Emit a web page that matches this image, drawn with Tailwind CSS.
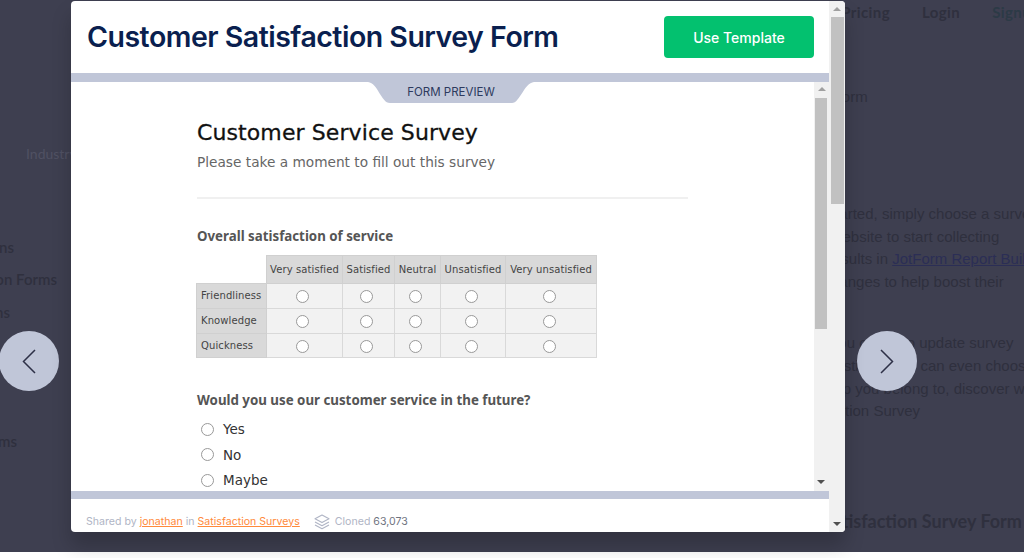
<!DOCTYPE html>
<html lang="en">
  <head>
    <meta charset="UTF-8" />
    <title>Customer Satisfaction Survey Form</title>
    <script src="https://cdn.jsdelivr.net/npm/@tailwindcss/browser@4"></script>
  </head>
  <body class="bg-white font-['Inter',sans-serif]">
    <div class="relative h-[558px] w-[1024px] overflow-hidden">
      <!-- Dimmed page behind the modal -->
      <div class="h-[552px] overflow-hidden bg-[#3e3f50] text-[#2f303e]">
        <!-- Nav -->
        <div class="flex h-[22px] items-end justify-start gap-[32px] pl-[845px] font-['Lato',sans-serif] text-[15px] leading-[20px] font-bold tracking-[0.4px]">
          <span class="flex w-[45px] justify-end">Pricing</span>
          <span>Login</span>
          <span class="text-[#2c3a46]">Signup</span>
        </div>
        <div class="flex">
          <!-- Left column -->
          <div class="w-[100px] font-['Lato',sans-serif] text-[15px] leading-[21px] font-semibold">
            <p class="mt-[121px] pl-[26px] text-[14px] font-normal whitespace-nowrap text-[#505163]">Industry</p>
            <div class="mt-[73px] flex w-[14px] justify-end whitespace-nowrap"><span>Registrations</span></div>
            <div class="mt-[11px] flex w-[57px] justify-end whitespace-nowrap"><span>Application Forms</span></div>
            <div class="mt-[12px] flex w-[10px] justify-end whitespace-nowrap"><span>Donations</span></div>
            <div class="mt-[108px] flex w-[17px] justify-end whitespace-nowrap"><span>Forms</span></div>
          </div>
          <!-- Right column -->
          <div class="ml-[706px] font-['Liberation_Sans',sans-serif] text-[15px] leading-[22.8px] whitespace-nowrap">
            <p class="mt-[64px] pl-[50px]">Form</p>
            <p class="mt-[94px]">To get started, simply choose a survey</p>
            <p class="ml-[-6px]">for your website to start collecting</p>
            <p class="pl-[12px]">your results in <span class="text-[#2b2e55] underline">JotForm Report Builder</span></p>
            <p>make changes to help boost their</p>
            <p class="mt-[38px] pl-[47px]">You can also update survey</p>
            <p class="pl-[36px]">questions, and can even choose</p>
            <p class="pl-[5px]">the group you belong to, discover what</p>
            <p class="pl-[9px]">Satisfaction Survey</p>
            <p class="mt-[87px] ml-[-42px] font-['Lato',sans-serif] text-[18px] font-bold">Customer Satisfaction Survey Form</p>
          </div>
        </div>
      </div>

      <!-- Previous / next -->
      <button class="absolute top-[331px] left-[-1px] flex h-[60px] w-[60px] items-center justify-center rounded-full bg-[#c0c6d8]">
        <svg width="14" height="25" viewBox="0 0 14 25" fill="none" stroke="#2d3047" stroke-width="1.5"><path d="M13 1 1.5 12.5 13 24" /></svg>
      </button>
      <button class="absolute top-[331px] left-[857px] flex h-[60px] w-[60px] items-center justify-center rounded-full bg-[#c0c6d8]">
        <svg width="14" height="25" viewBox="0 0 14 25" fill="none" stroke="#2d3047" stroke-width="1.5"><path d="M1 1 12.5 12.5 1 24" /></svg>
      </button>

      <!-- Modal -->
      <div class="absolute top-[1px] left-[71px] flex h-[531px] w-[774px] overflow-hidden rounded-[4px] bg-white shadow-[0_14px_20px_rgba(0,0,0,0.2)]">
        <div class="flex w-[758px] flex-col">
          <!-- Header -->
          <div class="flex h-[72px] shrink-0 items-center justify-between pr-[15px] pl-[16px]">
            <h1 class="font-['Inter',sans-serif] text-[28.5px] font-semibold tracking-[-0.5px] text-[#0a1f4f]">Customer Satisfaction Survey Form</h1>
            <button class="h-[42px] w-[150px] rounded-[4px] bg-[#03c16f] text-[14px] font-medium text-white">Use Template</button>
          </div>
          <div class="h-[9px] shrink-0 bg-[#c0c6d8]"></div>

          <!-- Form preview frame -->
          <div class="relative flex h-[409px] shrink-0">
            <div class="absolute top-0 left-[297px] flex h-[21px] w-[166px] justify-center">
              <svg class="absolute inset-0" width="166" height="21" viewBox="0 0 166 21" fill="#c0c6d8"><path d="M0 0H166C156 1 152 21 144 21H22C13 21 10 1 0 0Z" /></svg>
              <span class="relative text-[11.5px] leading-[20px] text-[#2d3a5e]">FORM PREVIEW</span>
            </div>
            <div class="w-[743px] overflow-hidden pt-[37px] pl-[126px] font-['DejaVu_Sans',sans-serif]">
              <h2 class="text-[22px] leading-[28px] font-medium tracking-[0.1px] text-[#111] [-webkit-text-stroke:0.3px_#111]">Customer Service Survey</h2>
              <p class="mt-[5px] text-[13.7px] leading-[20px] text-[#666]">Please take a moment to fill out this survey</p>
              <div class="mt-[25px] h-[2px] w-[491px] bg-[#f0f0f0]"></div>
              <h3 class="mt-[28px] font-['Noto_Sans',sans-serif] text-[13.3px] leading-[18px] font-bold text-[#555]">Overall satisfaction of service</h3>
              <table class="mt-[10px] ml-[-1px] table-fixed border-collapse text-[10px] tracking-[0.1px] text-[#444]">
                <thead>
                  <tr class="h-[28px] text-center">
                    <td class="w-[70px]"></td>
                    <td class="w-[76px] border border-[#d0d0d0] bg-[#d9d9d9]">Very satisfied</td>
                    <td class="w-[52px] border border-[#d0d0d0] bg-[#d9d9d9]">Satisfied</td>
                    <td class="w-[46px] border border-[#d0d0d0] bg-[#d9d9d9]">Neutral</td>
                    <td class="w-[65px] border border-[#d0d0d0] bg-[#d9d9d9]">Unsatisfied</td>
                    <td class="w-[91px] border border-[#d0d0d0] bg-[#d9d9d9]">Very unsatisfied</td>
                  </tr>
                </thead>
                <tbody>
                  <tr class="h-[25px]">
                    <td class="border border-[#d0d0d0] bg-[#d9d9d9] pb-[1px] pl-[4px]">Friendliness</td>
                    <td class="border border-[#d9d9d9] bg-[#f2f2f2] pt-[1px] pr-[4px]"><div class="mx-auto h-[13px] w-[13px] rounded-full border border-[#999] bg-white"></div></td>
                    <td class="border border-[#d9d9d9] bg-[#f2f2f2] pt-[1px] pr-[4px]"><div class="mx-auto h-[13px] w-[13px] rounded-full border border-[#999] bg-white"></div></td>
                    <td class="border border-[#d9d9d9] bg-[#f2f2f2] pt-[1px] pr-[4px]"><div class="mx-auto h-[13px] w-[13px] rounded-full border border-[#999] bg-white"></div></td>
                    <td class="border border-[#d9d9d9] bg-[#f2f2f2] pt-[1px] pr-[4px]"><div class="mx-auto h-[13px] w-[13px] rounded-full border border-[#999] bg-white"></div></td>
                    <td class="border border-[#d9d9d9] bg-[#f2f2f2] pt-[1px] pr-[4px]"><div class="mx-auto h-[13px] w-[13px] rounded-full border border-[#999] bg-white"></div></td>
                  </tr>
                  <tr class="h-[25px]">
                    <td class="border border-[#d0d0d0] bg-[#d9d9d9] pb-[1px] pl-[4px]">Knowledge</td>
                    <td class="border border-[#d9d9d9] bg-[#f2f2f2] pt-[1px] pr-[4px]"><div class="mx-auto h-[13px] w-[13px] rounded-full border border-[#999] bg-white"></div></td>
                    <td class="border border-[#d9d9d9] bg-[#f2f2f2] pt-[1px] pr-[4px]"><div class="mx-auto h-[13px] w-[13px] rounded-full border border-[#999] bg-white"></div></td>
                    <td class="border border-[#d9d9d9] bg-[#f2f2f2] pt-[1px] pr-[4px]"><div class="mx-auto h-[13px] w-[13px] rounded-full border border-[#999] bg-white"></div></td>
                    <td class="border border-[#d9d9d9] bg-[#f2f2f2] pt-[1px] pr-[4px]"><div class="mx-auto h-[13px] w-[13px] rounded-full border border-[#999] bg-white"></div></td>
                    <td class="border border-[#d9d9d9] bg-[#f2f2f2] pt-[1px] pr-[4px]"><div class="mx-auto h-[13px] w-[13px] rounded-full border border-[#999] bg-white"></div></td>
                  </tr>
                  <tr class="h-[24px]">
                    <td class="border border-[#d0d0d0] bg-[#d9d9d9] pb-[1px] pl-[4px]">Quickness</td>
                    <td class="border border-[#d9d9d9] bg-[#f2f2f2] pt-[1px] pr-[4px]"><div class="mx-auto h-[13px] w-[13px] rounded-full border border-[#999] bg-white"></div></td>
                    <td class="border border-[#d9d9d9] bg-[#f2f2f2] pt-[1px] pr-[4px]"><div class="mx-auto h-[13px] w-[13px] rounded-full border border-[#999] bg-white"></div></td>
                    <td class="border border-[#d9d9d9] bg-[#f2f2f2] pt-[1px] pr-[4px]"><div class="mx-auto h-[13px] w-[13px] rounded-full border border-[#999] bg-white"></div></td>
                    <td class="border border-[#d9d9d9] bg-[#f2f2f2] pt-[1px] pr-[4px]"><div class="mx-auto h-[13px] w-[13px] rounded-full border border-[#999] bg-white"></div></td>
                    <td class="border border-[#d9d9d9] bg-[#f2f2f2] pt-[1px] pr-[4px]"><div class="mx-auto h-[13px] w-[13px] rounded-full border border-[#999] bg-white"></div></td>
                  </tr>
                </tbody>
              </table>
              <h3 class="mt-[33px] font-['Noto_Sans',sans-serif] text-[13.3px] leading-[18px] font-bold text-[#555]">Would you use our customer service in the future?</h3>
              <div class="mt-[11px] flex flex-col gap-[7px] pl-[4px] text-[13.5px] leading-[18.5px] text-[#333]">
                <div class="flex items-center gap-[9px]"><div class="h-[13px] w-[13px] rounded-full border border-[#999]"></div>Yes</div>
                <div class="flex items-center gap-[9px]"><div class="h-[13px] w-[13px] rounded-full border border-[#999]"></div>No</div>
                <div class="flex items-center gap-[9px]"><div class="h-[13px] w-[13px] rounded-full border border-[#999]"></div>Maybe</div>
              </div>
            </div>
            <!-- Inner scrollbar -->
            <div class="relative w-[15px] bg-[#f1f1f1]">
              <div class="mx-auto mt-[5px] h-0 w-0 border-x-[4px] border-b-[4px] border-x-transparent border-b-[#a0a0a0]"></div>
              <div class="absolute top-[16px] left-[1px] h-[231px] w-[12px] bg-[#c1c1c1]"></div>
              <div class="absolute bottom-[7px] left-[3px] h-0 w-0 border-x-[4px] border-t-[4px] border-x-transparent border-t-[#505050]"></div>
            </div>
          </div>
          <div class="h-[8px] shrink-0 bg-[#c0c6d8]"></div>

          <!-- Footer -->
          <div class="flex flex-1 items-center gap-[14px] pt-[12px] pl-[15px] text-[10.6px] text-[#b0b5c5]">
            <p>Shared by <span class="text-[#ff8a3c] underline">jonathan</span> in <span class="text-[#ff8a3c] underline">Satisfaction Surveys</span></p>
            <div class="flex items-center gap-[5px]">
              <svg width="16" height="16" viewBox="0 0 16 16" fill="none" stroke="#b0b5c5" stroke-width="1.1" stroke-linejoin="round"><path d="M8 1 15 4.8 8 8.6 1 4.8Z" /><path d="M1 8 8 11.8 15 8" /><path d="M1 11 8 14.8 15 11" /></svg>
              <p>Cloned <span class="text-[#70747f]">63,073</span></p>
            </div>
          </div>
        </div>
        <!-- Outer scrollbar -->
        <div class="relative w-[16px] bg-[#f1f1f1]">
          <div class="mx-auto mt-[6px] h-0 w-0 border-x-[4px] border-b-[4px] border-x-transparent border-b-[#a0a0a0]"></div>
          <div class="absolute top-[16px] left-[2px] h-[187px] w-[13px] bg-[#c1c1c1]"></div>
          <div class="absolute bottom-[6px] left-[4px] h-0 w-0 border-x-[4px] border-t-[4px] border-x-transparent border-t-[#505050]"></div>
        </div>
      </div>
    </div>
  </body>
</html>
